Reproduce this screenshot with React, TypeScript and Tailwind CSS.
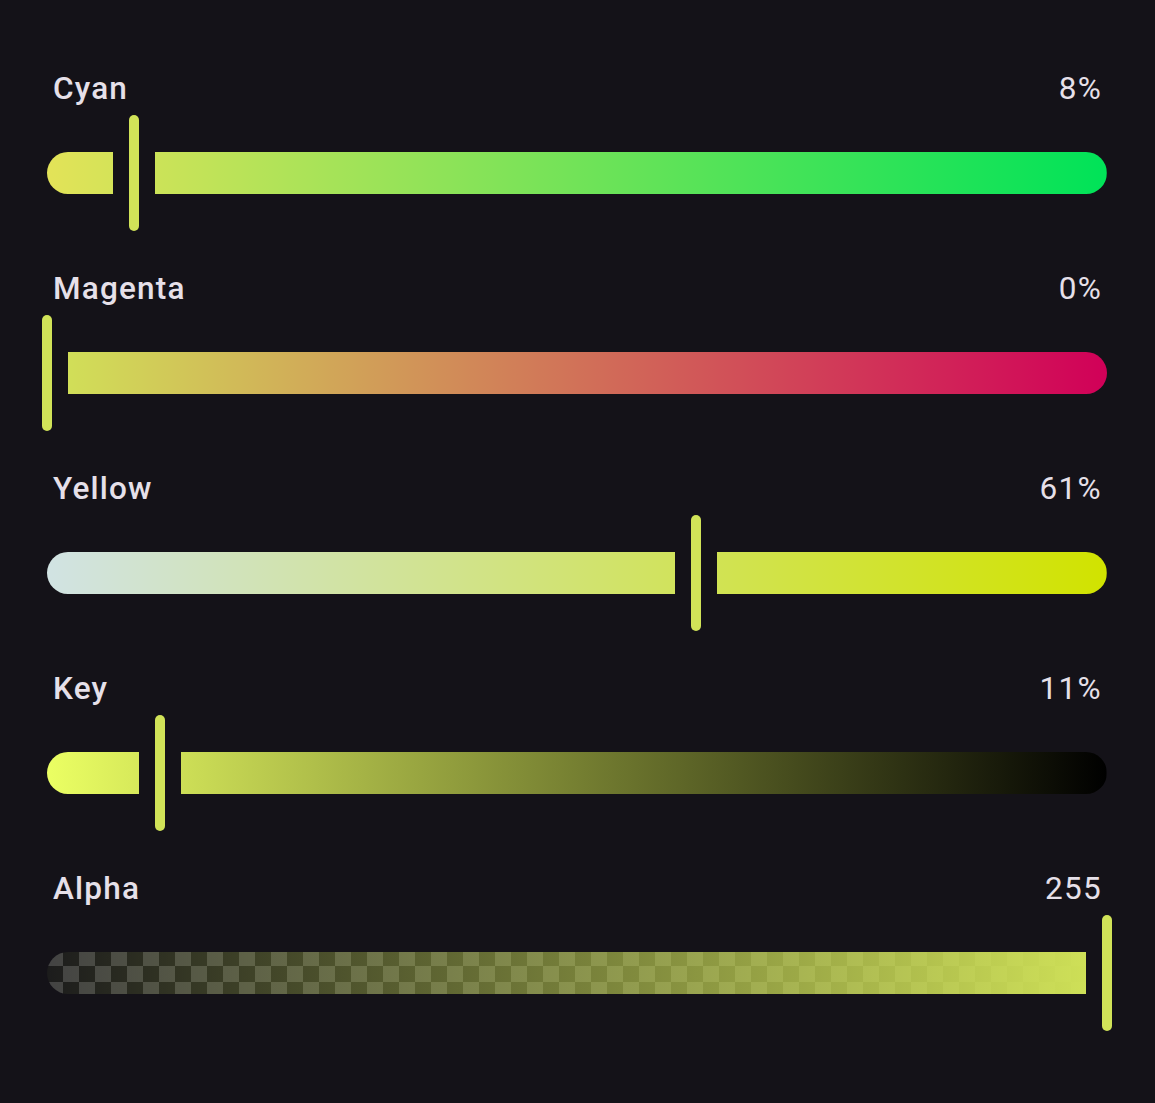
import React from 'react';

const TRACK_W = 1060;
const THUMB_W = 10;
const GAP = 16;

interface SliderRow {
  label: string;
  display: string;
  value: number;
  fill: string;
}

// gradients span the whole track, segments just show their slice of it
const rows: SliderRow[] = [
  {
    label: 'Cyan',
    display: '8%',
    value: 0.0823,
    fill: 'bg-[linear-gradient(to_right,#e3e358,#00e358)]',
  },
  {
    label: 'Magenta',
    display: '0%',
    value: 0,
    fill: 'bg-[linear-gradient(to_right,#d1e358,#d10058)]',
  },
  {
    label: 'Yellow',
    display: '61%',
    value: 0.6125,
    fill: 'bg-[linear-gradient(to_right,#d1e3e3,#d1e300)]',
  },
  {
    label: 'Key',
    display: '11%',
    value: 0.107,
    fill: 'bg-[linear-gradient(to_right,#ebff63,#000000)]',
  },
  {
    label: 'Alpha',
    display: '255',
    value: 1,
    fill: 'bg-[linear-gradient(to_right,rgba(209,227,88,0),#d1e358),repeating-conic-gradient(#1c1c1c_0%_25%,#434343_0%_50%)]',
  },
];

function Slider({ value, fill, checker }: { value: number; fill: string; checker: boolean }) {
  const c = value * TRACK_W;
  const leftW = Math.max(0, c - THUMB_W / 2 - GAP);
  const thumbMl = c - THUMB_W / 2 - leftW;
  const rightStart = c + THUMB_W / 2 + GAP;
  const rightW = TRACK_W - rightStart;
  const sizeCls = checker ? 'bg-size-[1060px_100%,32px_32px]' : 'bg-size-[1060px_100%]';

  return (
    <div className="mt-[6px] flex h-[116px] items-center">
      {leftW > 0 && (
        <div
          className={`h-[42px] shrink-0 rounded-l-full rounded-r-[5px] bg-no-repeat ${fill} ${sizeCls}`}
          style={{
            width: leftW,
            backgroundPosition: checker ? '0 0, 0 -2px' : '0 0',
            backgroundRepeat: checker ? 'no-repeat, repeat' : 'no-repeat',
          }}
        />
      )}
      <div
        className="h-[116px] w-[10px] shrink-0 rounded-full bg-[#d1e358]"
        style={{ marginLeft: thumbMl }}
      />
      {rightW > 0 && (
        <div
          className={`ml-4 h-[42px] shrink-0 rounded-l-[5px] rounded-r-full bg-no-repeat ${fill} ${sizeCls}`}
          style={{ width: rightW, backgroundPosition: `${-rightStart}px 0` }}
        />
      )}
    </div>
  );
}

export default function App() {
  return (
    <div
      className="min-h-screen bg-[#141218] pl-[47px] pt-[67px]"
      style={{ fontFamily: 'Roboto, "Noto Sans", sans-serif' }}
    >
      <div className="flex w-[1060px] flex-col gap-[36px]">
        {rows.map((row) => (
          <div key={row.label}>
            <div className="flex h-[42px] items-center justify-between pl-[6px] pr-[5px] pt-[2px] text-[31.5px] leading-[42px] text-[#e6e0e9]">
              <span className="font-medium tracking-[1.2px]">{row.label}</span>
              <span className="font-normal tracking-[1.3px]">{row.display}</span>
            </div>
            <Slider value={row.value} fill={row.fill} checker={row.label === 'Alpha'} />
          </div>
        ))}
      </div>
    </div>
  );
}
